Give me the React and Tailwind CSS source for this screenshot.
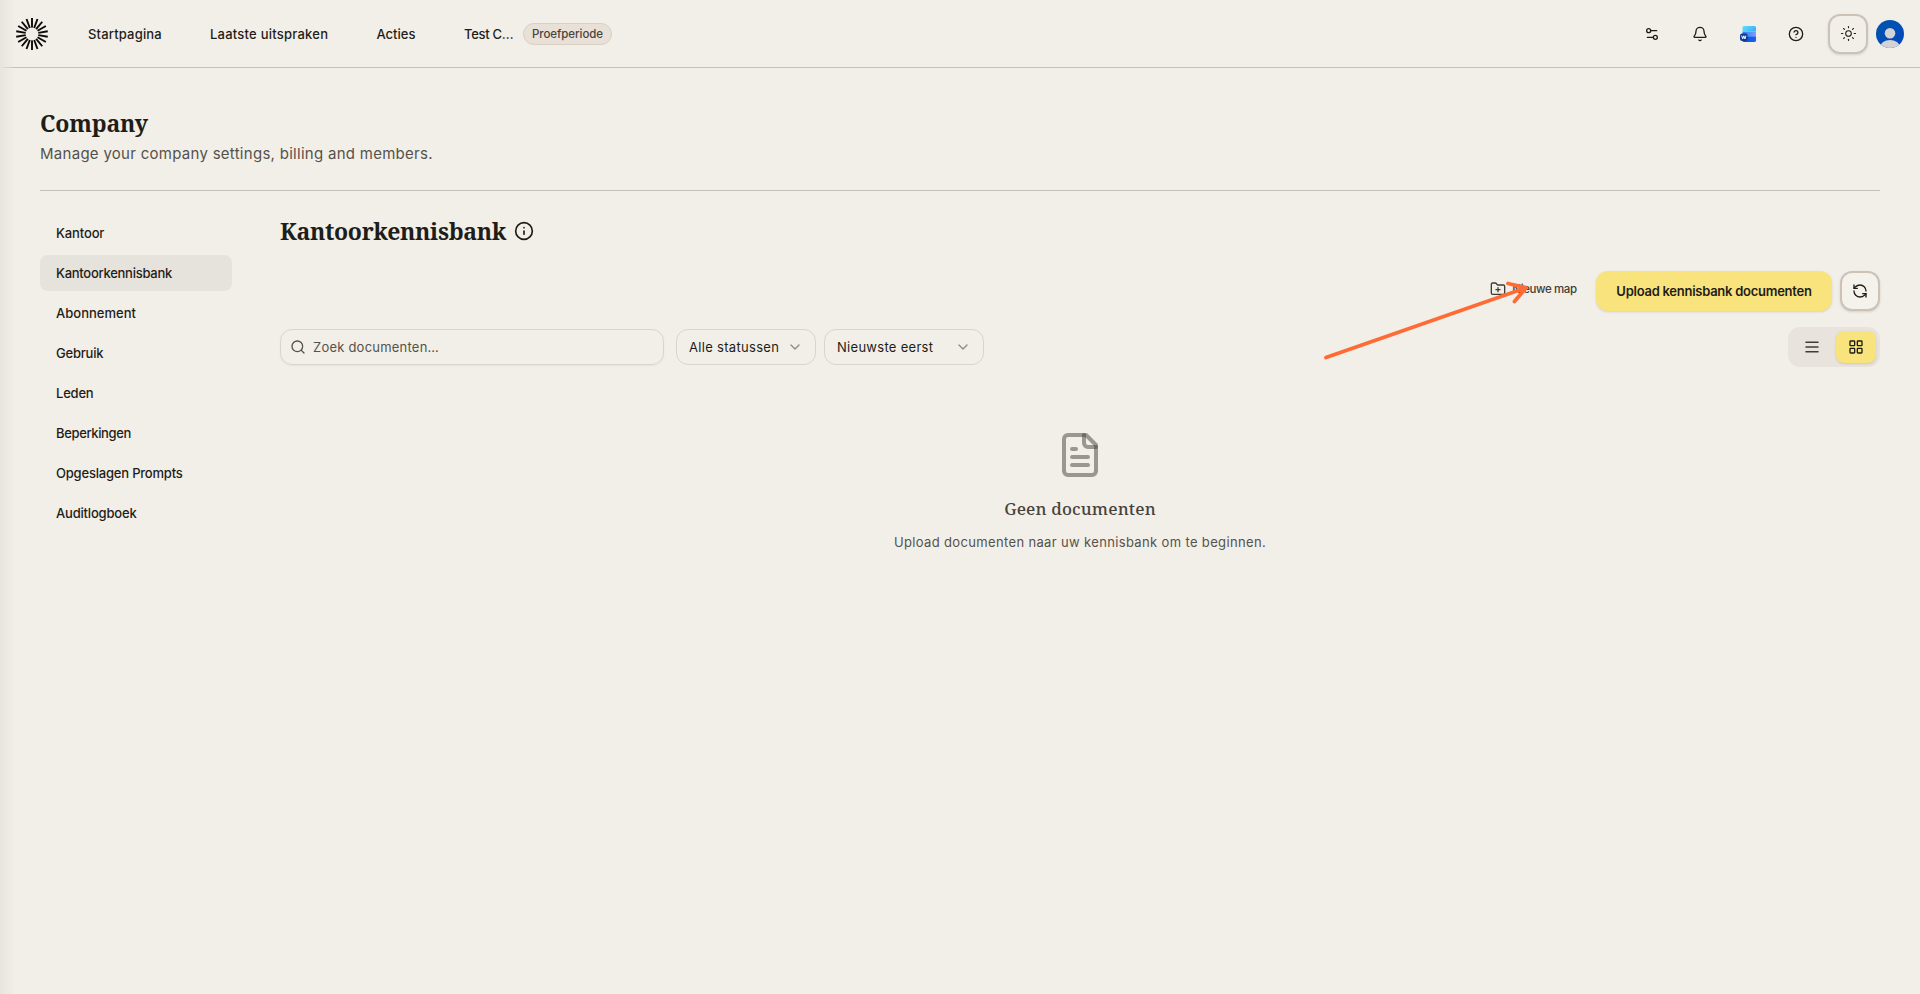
import { Bell, CircleHelp, ChevronDown, FolderPlus, Info, LayoutGrid, RefreshCcw, Search, Settings2, Sun } from "lucide-react";

const navItems = [
  { label: "Kantoor", tracking: "tracking-[-0.13px]" },
  { label: "Kantoorkennisbank", tracking: "tracking-[-0.27px]", active: true },
  { label: "Abonnement", tracking: "tracking-[0.02px]" },
  { label: "Gebruik", tracking: "tracking-[-0.2px]" },
  { label: "Leden", tracking: "tracking-[-0.2px]" },
  { label: "Beperkingen", tracking: "tracking-[-0.36px]" },
  { label: "Opgeslagen Prompts", tracking: "tracking-[-0.2px]" },
  { label: "Auditlogboek", tracking: "tracking-[-0.19px]" },
];

const rays = Array.from({ length: 18 }, (_, i) => i * 20);

function Logo() {
  return (
    <svg width="32" height="32" viewBox="0 0 32 32" className="shrink-0">
      {rays.map((angle) => (
        <rect key={angle} x="15.050" y="0" width="1.900" height="9.600" fill="#0a0a08" transform={`rotate(${angle} 16 16)`} />
      ))}
    </svg>
  );
}

function WordIcon() {
  return (
    <svg width="16" height="16" viewBox="0 0 16 16">
      <defs>
        <linearGradient id="wordTop" x1="0" y1="0" x2="1" y2="0.4">
          <stop offset="0" stopColor="#5fe0fb" />
          <stop offset="1" stopColor="#3fb2f8" />
        </linearGradient>
        <linearGradient id="wordMid" x1="0" y1="0" x2="1" y2="0">
          <stop offset="0" stopColor="#2b7df0" />
          <stop offset="1" stopColor="#7f9ffb" />
        </linearGradient>
        <linearGradient id="wordLow" x1="0" y1="0" x2="1" y2="0">
          <stop offset="0" stopColor="#0a4fd0" />
          <stop offset="1" stopColor="#1f5ff8" />
        </linearGradient>
      </defs>
      <path d="M2.500 10H16v4.400a1.600 1.600 0 0 1-1.600 1.600H4.100A1.600 1.600 0 0 1 2.500 14.400z" fill="url(#wordLow)" />
      <path d="M2.500 5.500H16v5.200H2.500z" fill="url(#wordMid)" />
      <path d="M4.100 0H14.400A1.600 1.600 0 0 1 16 1.600V5.600H2.500V1.600A1.600 1.600 0 0 1 4.100 0z" fill="url(#wordTop)" />
      <rect x="0" y="7.500" width="7.600" height="7.500" rx="2.200" fill="#0b3a9a" />
      <path d="M1.700 9.600l1 3.400 1.100-3.200 1.100 3.200 1-3.400" fill="none" stroke="#fff" strokeWidth="1" strokeLinejoin="round" />
    </svg>
  );
}

function Avatar() {
  return (
    <svg width="28" height="28" viewBox="0 0 28 28" className="shrink-0">
      <defs>
        <clipPath id="avatarClip">
          <circle cx="14" cy="14" r="14" />
        </clipPath>
        <linearGradient id="avatarFill" x1="0" y1="0" x2="1" y2="1">
          <stop offset="0" stopColor="#0057a8" />
          <stop offset="1" stopColor="#0345c4" />
        </linearGradient>
      </defs>
      <g clipPath="url(#avatarClip)">
        <rect width="28" height="28" fill="url(#avatarFill)" />
        <circle cx="14" cy="13.200" r="5.300" fill="#d3d3d6" />
        <ellipse cx="14" cy="27" rx="9.800" ry="7" fill="#d3d3d6" />
      </g>
    </svg>
  );
}

function FileTextIcon() {
  return (
    <svg width="48" height="48" viewBox="0 0 24 24" fill="none" stroke="#42403a" strokeOpacity="0.5" strokeWidth="2" strokeLinecap="round" strokeLinejoin="round">
      <path d="M15 2H6a2 2 0 0 0-2 2v16a2 2 0 0 0 2 2h12a2 2 0 0 0 2-2V7Z" />
      <path d="M14 2v4a2 2 0 0 0 2 2h4" />
      <path d="M10 9H8" />
      <path d="M16 13H8" />
      <path d="M16 17H8" />
    </svg>
  );
}

function Header() {
  return (
    <header className="flex h-[68px] items-center border-b border-[#c4c0b8] pr-4 pl-4 text-[13px] font-medium">
      <Logo />
      <nav className="ml-10 flex items-center gap-12 pt-0.5 whitespace-nowrap">
        <a className="w-[74px] tracking-[0.17px]">Startpagina</a>
        <a className="w-[118.500px] tracking-[0.23px]">Laatste uitspraken</a>
        <a className="w-[39.500px]">Acties</a>
        <div className="flex items-center">
          <span className="w-[59px] tracking-[-0.3px]">Test C…</span>
          <span className="-mt-px flex h-[22px] w-[89px] items-center justify-center rounded-full border border-[#d9cfc4] bg-[#e9e0d7] pt-px text-[11.500px] font-medium tracking-[-0.06px] text-[#4a443c]">
            Proefperiode
          </span>
        </div>
      </nav>
      <div className="ml-auto flex items-center">
        <div className="flex items-center gap-8">
          <Settings2 size={16} strokeWidth={2} />
          <Bell size={16} strokeWidth={2} />
          <WordIcon />
          <CircleHelp size={16} strokeWidth={2} />
        </div>
        <button className="ml-6 flex size-10 items-center justify-center rounded-xl border-2 border-[#cdc2b6] shadow-sm">
          <Sun size={17} strokeWidth={1.5} />
        </button>
        <div className="ml-2">
          <Avatar />
        </div>
      </div>
    </header>
  );
}

function Sidebar() {
  return (
    <aside className="flex w-48 shrink-0 flex-col gap-1">
      {navItems.map((item) => (
        <a
          key={item.label}
          className={`flex h-9 items-center rounded-lg px-4 pt-0.5 text-[13px] font-medium whitespace-nowrap ${item.tracking} ${item.active ? "bg-[#e6e2dc]" : ""}`}
        >
          {item.label}
        </a>
      ))}
    </aside>
  );
}

function Arrow() {
  return (
    <svg className="pointer-events-none absolute top-[270px] left-[1315px]" width="230" height="100" viewBox="0 0 230 100" fill="none" stroke="#ff6b35" strokeWidth="3.800" strokeLinecap="round" strokeLinejoin="round">
      <path d="M11 87.500L210.500 18" />
      <path d="M193 13.500L211 17.700L199.500 31.500" />
    </svg>
  );
}

export default function App() {
  return (
    <div className="relative min-h-[994px] bg-[#f2efe8] font-['Inter',sans-serif] text-[#1f1d18]">
      <Header />
      <main className="px-10 pt-[39px]">
        <div className="border-b border-[#c4c0b8] pb-6">
          <h1 className="font-['Noto_Serif','Liberation_Serif',serif] text-[23px] leading-8 font-bold tracking-[-0.15px]">Company</h1>
          <p className="mt-[3px] text-[15px] leading-6 tracking-[0.28px] text-[#55524b]">Manage your company settings, billing and members.</p>
        </div>
        <div className="flex gap-12 pt-6">
          <Sidebar />
          <section className="flex-1">
            <div className="flex h-8 items-center gap-2">
              <h2 className="w-[226px] font-['Noto_Serif','Liberation_Serif',serif] text-[23px] leading-8 font-bold tracking-[-0.32px] whitespace-nowrap">Kantoorkennisbank</h2>
              <Info size={20} strokeWidth={2} />
            </div>
            <div className="mt-6 flex items-start justify-end">
              <button className="mr-[19px] flex h-9 items-center gap-1.5 text-[#3f3c36]">
                <FolderPlus size={16} strokeWidth={2} />
                <span className="w-[65px] pt-0.5 text-[11.500px] font-medium tracking-[-0.4px] whitespace-nowrap">Nieuwe map</span>
              </button>
              <button className="flex h-10 w-[236px] items-center justify-center rounded-xl bg-[#f9e37c] pt-0.5 text-[13px] font-semibold tracking-[-0.26px] whitespace-nowrap shadow-sm">
                Upload kennisbank documenten
              </button>
              <button className="ml-2 flex size-10 items-center justify-center rounded-xl border-2 border-[#cdc2b6] bg-[#f5f2ec] shadow-sm">
                <RefreshCcw size={16} strokeWidth={2} />
              </button>
            </div>
            <div className="mt-4 flex h-10 items-center text-[13px]">
              <div className="flex h-9 w-96 items-center gap-[7px] rounded-xl border border-[#d9d5cd] px-[9px] text-[#55524b] shadow-xs">
                <Search size={16} strokeWidth={2} />
                <span className="pt-0.5 tracking-[0.22px]">Zoek documenten…</span>
              </div>
              <button className="ml-3 flex h-9 w-[140px] items-center justify-between rounded-xl border border-[#d9d5cd] px-3 whitespace-nowrap">
                <span className="pt-0.5 tracking-[0.31px]">Alle statussen</span>
                <ChevronDown size={16} strokeWidth={2} color="#8e8b84" />
              </button>
              <button className="ml-2 flex h-9 w-[160px] items-center justify-between rounded-xl border border-[#d9d5cd] px-3 whitespace-nowrap">
                <span className="pt-0.5 tracking-[0.29px]">Nieuwste eerst</span>
                <ChevronDown size={16} strokeWidth={2} color="#8e8b84" />
              </button>
              <div className="ml-auto flex h-10 w-[92px] items-center gap-1 rounded-xl bg-[#e8e4dd] p-1">
                <span className="flex h-8 flex-1 items-center justify-center text-[#3f3c36]">
                  <svg width="16" height="16" viewBox="0 0 24 24" fill="none" stroke="currentColor" strokeWidth="2.300" strokeLinecap="round">
                    <path d="M3 5h18M3 12h18M3 19h18" />
                  </svg>
                </span>
                <span className="flex h-8 w-10 items-center justify-center rounded-lg bg-[#f9e37c] shadow-sm">
                  <LayoutGrid size={16} strokeWidth={2} />
                </span>
              </div>
            </div>
            <div className="flex flex-col items-center pt-16">
              <FileTextIcon />
              <h3 className="mt-4 font-['Noto_Serif','Liberation_Serif',serif] text-[17px] leading-7 font-medium tracking-[0.14px] text-[#46433c]">Geen documenten</h3>
              <p className="mt-[9px] text-[13px] leading-5 tracking-[0.35px] text-[#55524b]">Upload documenten naar uw kennisbank om te beginnen.</p>
            </div>
          </section>
        </div>
      </main>
      <div className="pointer-events-none absolute inset-y-0 left-0 w-4 bg-gradient-to-r from-[#e8e5de] to-[#f2efe8]/0" />
      <Arrow />
    </div>
  );
}
